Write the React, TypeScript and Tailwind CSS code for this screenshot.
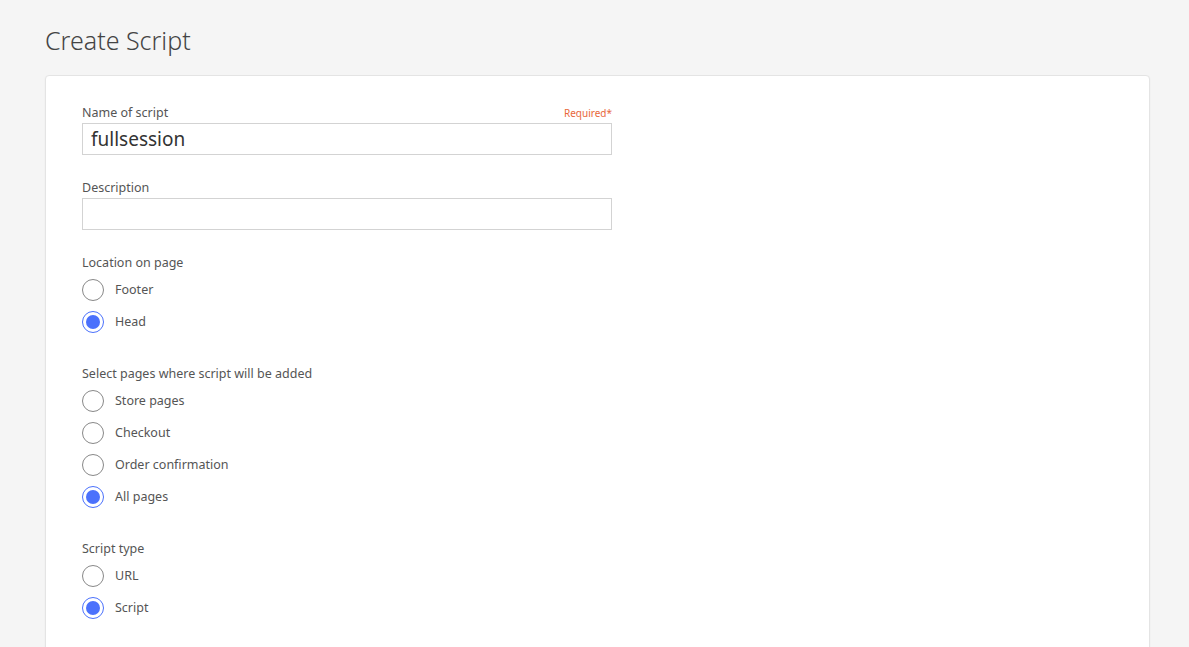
import { ReactNode } from 'react';

function Radio({ label, checked }: { label: string; checked?: boolean }) {
    return (
        <label className="flex h-[32px] items-center gap-[11px] text-[12.5px] text-[#555]">
            <span
                className={`flex h-[22px] w-[22px] items-center justify-center rounded-full border bg-white ${
                    checked ? 'border-[#4b71fc]' : 'border-[#888]'
                }`}
            >
                {checked && <span className="h-[14px] w-[14px] rounded-full bg-[#4b71fc]" />}
            </span>
            <span>{label}</span>
        </label>
    );
}

function Group({ title, children }: { title: string; children: ReactNode }) {
    return (
        <div className="mb-[27px]">
            <div className="mb-[2px] text-[12.5px] leading-[18px] text-[#555]">{title}</div>
            {children}
        </div>
    );
}

export default function App() {
    return (
        <div className="min-h-[647px] bg-[#f5f5f5] font-['Open_Sans',sans-serif]">
            <div className="pl-[45px] pr-[39px] pt-[25px]">
                <h1 className="mb-[20px] text-[25px] font-light leading-[30px] text-[#444]">Create Script</h1>
                <div className="h-[580px] rounded-sm border border-[#e4e4e4] bg-white pl-[36px] pt-[29px] shadow-[0_1px_2px_rgba(0,0,0,0.06)]">
                    <div className="w-[530px]">
                        <div className="mb-[25px]">
                            <div className="mb-[2px] flex items-end justify-between text-[12.5px] leading-[16px] text-[#555]">
                                <span>Name of script</span>
                                <span className="text-[10px] text-[#e8683b]">Required*</span>
                            </div>
                            <div className="flex h-[32px] items-center border border-[#d3d3d3] px-[8px] text-[19px] text-[#333]">
                                fullsession
                            </div>
                        </div>
                        <div className="mb-[24px]">
                            <div className="mb-[2px] text-[12.5px] leading-[16px] text-[#555]">Description</div>
                            <div className="h-[32px] border border-[#d3d3d3]" />
                        </div>
                    </div>
                    <Group title="Location on page">
                        <Radio label="Footer" />
                        <Radio label="Head" checked />
                    </Group>
                    <Group title="Select pages where script will be added">
                        <Radio label="Store pages" />
                        <Radio label="Checkout" />
                        <Radio label="Order confirmation" />
                        <Radio label="All pages" checked />
                    </Group>
                    <Group title="Script type">
                        <Radio label="URL" />
                        <Radio label="Script" checked />
                    </Group>
                </div>
            </div>
        </div>
    );
}
